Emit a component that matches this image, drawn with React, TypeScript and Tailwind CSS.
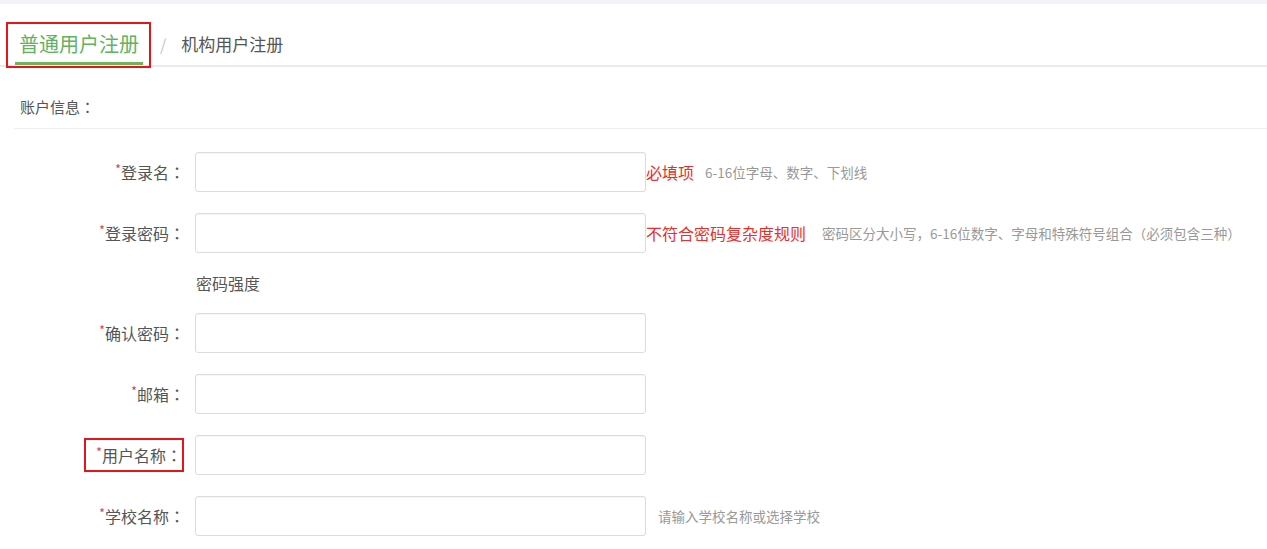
import React from 'react';

interface FieldRow {
    label: string;
    marked?: boolean;
    error?: string;
    hint?: string;
    hintGap?: string;
}

const rows: FieldRow[] = [
    { label: '登录名', error: '必填项', hint: '6-16位字母、数字、下划线', hintGap: 'ml-[11px]' },
    { label: '登录密码', error: '不符合密码复杂度规则', hint: '密码区分大小写，6-16位数字、字母和特殊符号组合（必须包含三种）', hintGap: 'ml-[16px]' },
    { label: '确认密码' },
    { label: '邮箱' },
    { label: '用户名称', marked: true },
    { label: '学校名称', hint: '请输入学校名称或选择学校', hintGap: 'ml-[12px]' },
];

// centred full-width colon, as in the original page
const Colon = () => <span className="font-['Noto_Sans_CJK_TC',sans-serif]">：</span>;

const Label: React.FC<{ text: string; marked?: boolean }> = ({ text, marked }) => (
    <div className="w-[185px] shrink-0 flex justify-end">
        <span
            className={`flex items-start leading-[22px] ${marked ? 'border-2 border-[#e2161b] pl-[10px] py-[4px] mr-[1px]' : ''}`}
        >
            <span className="text-[12px] text-[#e53935] leading-[16px]">*</span>
            <span className="text-[16px] text-[#555]">
                {text}
                <Colon />
            </span>
        </span>
    </div>
);

const Row: React.FC<{ row: FieldRow }> = ({ row }) => (
    <div className="flex items-center h-10">
        <Label text={row.label} marked={row.marked} />
        <input
            type="text"
            className="ml-[10px] w-[451px] h-10 border border-[#dcdcdc] rounded-[3px] bg-white shadow-[inset_0_1px_1px_rgba(0,0,0,0.04)] outline-none"
        />
        {row.error && <span className="text-[16px] text-[#e8302b] whitespace-nowrap">{row.error}</span>}
        {row.hint && (
            <span className={`${row.hintGap} text-[13.5px] text-[#999] whitespace-nowrap`}>{row.hint}</span>
        )}
    </div>
);

export default function App() {
    const [first, second, ...rest] = rows;

    return (
        <div className="w-[1267px] h-[549px] bg-white overflow-hidden font-['Noto_Sans_CJK_SC','Noto_Sans',sans-serif]">
            <div className="h-1 bg-[#f2f3f8]" />

            {/* tabs */}
            <div className="h-[63px] border-b-2 border-[#ebebeb] flex items-end">
                <div className="ml-[6px] -mb-[3px] h-[46px] border-2 border-[#e2161b] pl-[7px] pr-[6px] pb-[1px] flex items-end">
                    <div className="border-b-[3px] border-[#6cb35d] px-[4px] pb-[4px] text-[20px] leading-[28px] text-[#62b35f]">
                        普通用户注册
                    </div>
                </div>
                <div className="mb-[9px] flex items-center leading-[24px]">
                    <span className="ml-[9px] text-[16px] text-[#c4c4c4]">/</span>
                    <span className="ml-[15px] text-[17px] text-[#555]">机构用户注册</span>
                </div>
            </div>

            {/* section title */}
            <div className="ml-[14px] h-[62px] border-b border-[#efefef] flex items-end pb-[11px] pl-[6px]">
                <span className="text-[15px] leading-[20px] text-[#555]">
                    账户信息
                    <Colon />
                </span>
            </div>

            {/* form */}
            <div className="mt-[23px] flex flex-col gap-[21px]">
                <Row row={first} />
                <Row row={second} />
                <div className="h-[18px] flex items-center pl-[196px] text-[16px] text-[#555]">密码强度</div>
                {rest.map(r => (
                    <Row key={r.label} row={r} />
                ))}
            </div>
        </div>
    );
}
